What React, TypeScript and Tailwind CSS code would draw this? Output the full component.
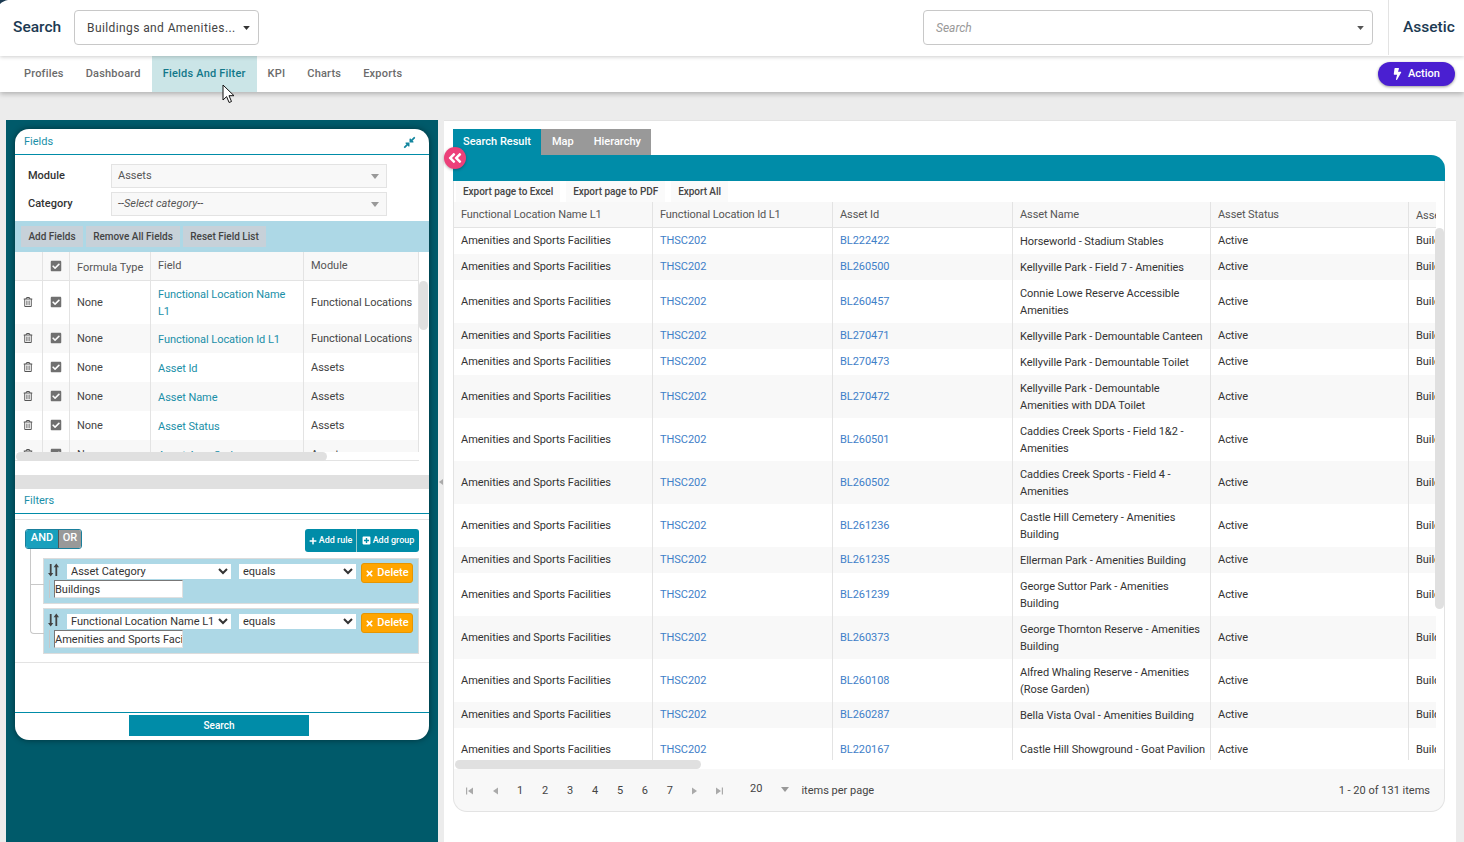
import { FaAngleDoubleLeft, FaBolt, FaCheckSquare, FaCompressAlt, FaPlus, FaPlusSquare, FaRegTrashAlt, FaTimes } from "react-icons/fa";

const navItems = ["Profiles", "Dashboard", "Fields And Filter", "KPI", "Charts", "Exports"];

const fieldRows = [
  { field: "Functional Location Name L1", module: "Functional Locations", tall: true },
  { field: "Functional Location Id L1", module: "Functional Locations", tall: false },
  { field: "Asset Id", module: "Assets", tall: false },
  { field: "Asset Name", module: "Assets", tall: false },
  { field: "Asset Status", module: "Assets", tall: false },
  { field: "Asset Area Code", module: "Assets", tall: false },
];

const results = [
  ["BL222422", "Horseworld - Stadium Stables"],
  ["BL260500", "Kellyville Park - Field 7 - Amenities"],
  ["BL260457", "Connie Lowe Reserve Accessible Amenities"],
  ["BL270471", "Kellyville Park - Demountable Canteen"],
  ["BL270473", "Kellyville Park - Demountable Toilet"],
  ["BL270472", "Kellyville Park - Demountable Amenities with DDA Toilet"],
  ["BL260501", "Caddies Creek Sports - Field 1&2 - Amenities"],
  ["BL260502", "Caddies Creek Sports - Field 4 - Amenities"],
  ["BL261236", "Castle Hill Cemetery - Amenities Building"],
  ["BL261235", "Ellerman Park - Amenities Building"],
  ["BL261239", "George Suttor Park - Amenities Building"],
  ["BL260373", "George Thornton Reserve - Amenities Building"],
  ["BL260108", "Alfred Whaling Reserve - Amenities (Rose Garden)"],
  ["BL260287", "Bella Vista Oval - Amenities Building"],
  ["BL220167", "Castle Hill Showground - Goat Pavilion"],
];

const Caret = ({ className }: { className: string }) => (
  <svg viewBox="0 0 10 6" className={className} fill="currentColor">
    <path d="M0 0h10L5 6z" />
  </svg>
);

const SortIcon = () => (
  <svg viewBox="0 0 11 14" className="h-[14px] w-[11px] text-[#444]" fill="currentColor">
    <path d="M1.8 1h1.8v9h1.7L2.7 13.5 0 10h1.8zM7.4 4.2H5.6L8.3.5 11 4.2H9.2V13H7.4z" />
  </svg>
);

const PagerIcon = ({ dir, edge }: { dir: "left" | "right"; edge?: boolean }) => (
  <svg viewBox="0 0 8 8" className="h-2 w-2 text-[#aaa]" fill="currentColor">
    {dir === "left" ? <path d="M7 .5v7L2 4z" /> : <path d="M1 .5v7L6 4z" />}
    {edge && (dir === "left" ? <path d="M0 .5h1.2v7H0z" /> : <path d="M6.8 .5H8v7H6.8z" />)}
  </svg>
);

const FormRow = ({ label, value, italic }: { label: string; value: string; italic?: boolean }) => (
  <div className="flex h-6 items-center">
    <div className="w-[96px] pl-[13px] text-[11px] font-medium text-[#333]">{label}</div>
    <div className={`flex h-6 w-[276px] items-center justify-between border border-[#e3e3e3] bg-[#f8f8f8] pl-[6px] pr-[7px] text-[11px] text-[#555] ${italic ? "italic" : ""}`}>
      {value}
      <Caret className="h-[5px] w-2 text-[#999]" />
    </div>
  </div>
);

const FilterRule = ({ field, value }: { field: string; value: string }) => (
  <div className="h-[46px] border border-[#dcdcdc] bg-[#add8e6] px-[4px] pt-[5px]">
    <div className="flex h-[16px] items-start">
      <span className="-mt-[1px] w-[19px]"><SortIcon /></span>
      <select defaultValue={field} className="h-[15px] w-[164px] bg-white text-[11px] text-[#333] outline-none">
        <option>{field}</option>
      </select>
      <select defaultValue="equals" className="ml-2 h-[15px] w-[117px] bg-white text-[11px] text-[#333] outline-none">
        <option>equals</option>
      </select>
      <button className="ml-[5px] -mt-[1px] flex h-[20px] w-[52px] shrink-0 items-center justify-center gap-[3px] rounded-[3px] border border-[#e69500] bg-[#ffa500] text-[11px] font-medium text-white">
        <FaTimes className="h-[9px] w-[9px]" />
        Delete
      </button>
    </div>
    <div className="flex h-[19px] items-start pl-[1px]">
      <div className="h-[18px] w-[1px] bg-[#c8c8c8]" />
      <input
        readOnly
        defaultValue={value}
        className="ml-[4px] h-[18px] w-[129px] border border-[#e0e0e0] border-l-[#777] border-t-[#777] bg-white text-[11px] text-[#333] outline-none"
      />
    </div>
  </div>
);

const App = () => {
  return (
    <div className="relative h-[842px] w-[1464px] overflow-hidden bg-[#ececec] font-['Roboto',sans-serif]">
      {/* Top header */}
      <header className="relative z-20 flex h-[56px] items-center bg-white pb-[1px] pl-[13px] shadow-[0_1px_4px_rgba(0,0,0,0.2)]">
        <div className="w-[61px] text-[15.5px] font-medium text-[#1c3a52]">Search</div>
        <div className="flex h-[35px] w-[185px] items-center justify-between rounded border border-[#c8c8c8] pl-3 pr-2 text-xs tracking-[0.4px] text-[#444]">
          Buildings and Amenities...
          <Caret className="h-[4px] w-[7px] text-[#333]" />
        </div>
        <div className="ml-[664px] flex h-[35px] w-[450px] items-center justify-between rounded border border-[#c8c8c8] pl-3 pr-2 text-xs italic text-[#999]">
          Search
          <Caret className="h-[4px] w-[7px] text-[#555]" />
        </div>
        <div className="ml-[15px] flex h-full items-center border-l border-[#e3e3e3] pl-[14px] text-[15.5px] font-medium text-[#1c3a52]">Assetic</div>
      </header>

      {/* Tabs */}
      <nav className="relative z-10 flex h-[36px] items-center justify-between bg-white pl-[13px] pr-[9px] shadow-[0_2px_5px_rgba(0,0,0,0.25)]">
        <div className="flex h-full">
          {navItems.map((item) => (
            <div
              key={item}
              className={
                item === "Fields And Filter"
                  ? "flex items-center bg-[#cbe5e7] px-[11px] text-[11px] font-medium tracking-[0.2px] text-[#12788a]"
                  : "flex items-center px-[11px] text-[11px] font-medium tracking-[0.2px] text-[#6b6b6b]"
              }
            >
              {item}
            </div>
          ))}
        </div>
        <button className="flex h-6 w-[77px] items-center justify-center gap-[6px] rounded-full bg-[#4a1fd1] text-[11px] font-medium text-white shadow-[0_1px_3px_rgba(0,0,0,0.4)]">
          <FaBolt className="h-3 w-[9px]" />
          Action
        </button>
      </nav>

      <main className="flex pl-[6px] pt-[28px]">
        {/* Left panel */}
        <aside className="h-[722px] w-[432px] bg-[#005a6a] p-[9px]">
          <div className="flex h-[611px] w-[414px] flex-col overflow-hidden rounded-[14px] bg-white shadow-[0_0_6px_rgba(0,0,0,0.45)]">
            <div className="flex h-[26px] shrink-0 items-center justify-between border-b border-[#008ca8] pl-[9px] pr-[13px] pt-[1px] text-[11px] text-[#1a8fa8]">
              Fields
              <FaCompressAlt className="h-[13px] w-[13px] text-[#12859e]" />
            </div>
            <div className="flex h-[66px] shrink-0 flex-col gap-1 pt-[9px]">
              <FormRow label="Module" value="Assets" />
              <FormRow label="Category" value="--Select category--" italic />
            </div>
            <div className="flex h-[31px] shrink-0 items-center gap-[3px] bg-[#add8e6] pl-[6px] text-[10px] font-medium text-[#444]">
              <div className="flex h-[21px] w-[62px] items-center justify-center bg-[#c7d1d9]">Add Fields</div>
              <div className="flex h-[21px] w-[94px] items-center justify-center bg-[#c7d1d9]">Remove All Fields</div>
              <div className="flex h-[21px] w-[83px] items-center justify-center bg-[#c7d1d9]">Reset Field List</div>
            </div>

            {/* Field list */}
            <div className="relative h-[209px] shrink-0 overflow-hidden">
              <div className="flex h-[29px] w-[404px] border-b border-[#e3e3e3] bg-[#f8f8f8] text-[11px] text-[#555]">
                <div className="w-[28px] border-r border-[#e3e3e3]" />
                <div className="flex w-[27px] items-center justify-center border-r border-[#e3e3e3]">
                  <FaCheckSquare className="h-3 w-3 text-[#707070]" />
                </div>
                <div className="flex w-[81px] items-center border-r border-[#e3e3e3] pl-[7px] pt-[4px]">Formula Type</div>
                <div className="flex w-[153px] items-center border-r border-[#e3e3e3] pl-[7px] pt-[1px]">Field</div>
                <div className="flex w-[115px] items-center border-r border-[#e3e3e3] pl-[7px] pt-[1px]">Module</div>
              </div>
              <div className="h-[171px] overflow-hidden">
                {fieldRows.map((row, i) => (
                  <div
                    key={row.field}
                    className={`flex w-[404px] text-[11px] tracking-[-0.05px] text-[#444] ${row.tall ? "h-[43px]" : "h-[29px]"} ${i % 2 ? "bg-[#f8f8f8]" : "bg-white"}`}
                  >
                    <div className="flex w-[28px] items-center justify-center border-r border-[#e3e3e3] pb-[1px] pr-[1px]">
                      <FaRegTrashAlt className="h-[10px] w-[10px] text-[#555]" />
                    </div>
                    <div className="flex w-[27px] items-center justify-center border-r border-[#e3e3e3] pb-[1px]">
                      <FaCheckSquare className="h-3 w-3 text-[#707070]" />
                    </div>
                    <div className="flex w-[81px] items-center border-r border-[#e3e3e3] pl-[7px] pt-[1px]">None</div>
                    <div className="flex w-[153px] items-center border-r border-[#e3e3e3] px-[7px] pt-[1px] leading-[17px] text-[#1a8fa8]">{row.field}</div>
                    <div className="flex w-[115px] items-center border-r border-[#e3e3e3] pl-[7px] pt-[1px] whitespace-nowrap">{row.module}</div>
                  </div>
                ))}
              </div>
              <div className="h-[9px] w-[404px] border-b border-[#e3e3e3]" />
              <div className="absolute left-[1px] top-[200px] h-[9px] w-[311px] rounded-full bg-[#e0e0e0]" />
              <div className="absolute right-[1px] top-[29px] h-[49px] w-[9px] rounded-full bg-[#e0e0e0]" />
            </div>

            <div className="h-[14px] shrink-0" />
            <div className="h-[14px] shrink-0 bg-[#e0e0e0]" />
            <div className="flex h-[25px] shrink-0 items-center border-b border-[#008ca8] pl-[9px] pt-[1px] text-[11px] text-[#1a8fa8]">Filters</div>

            {/* Query builder */}
            <div className="relative mt-[5px] h-[144px] shrink-0 border-y border-[#e3e3e3] pl-[28px] pr-[10px] pt-[9px]">
              <div className="absolute left-[15px] top-[29px] h-[85px] w-[14px] rounded-bl-sm border-b border-l border-[#c8c8c8]" />
              <div className="absolute left-[15px] top-[64px] h-[1px] w-[14px] bg-[#c8c8c8]" />
              <div className="flex h-[29px] items-start justify-between">
                <div className="-ml-[18px] flex h-5 w-[57px] overflow-hidden rounded-[3px] border border-[#1a7f9c] text-[11px] font-medium text-white">
                  <div className="flex w-[32px] items-center justify-center bg-[#18a0bd] pb-[2px]">AND</div>
                  <div className="flex flex-1 items-center justify-center border-l border-[#555] bg-[#999] pb-[2px]">OR</div>
                </div>
                <div className="flex h-[23px] w-[114px] overflow-hidden rounded-[3px] bg-[#008ca8] text-[9px] font-medium text-white">
                  <div className="flex w-[52px] items-center justify-center gap-[2px] border-r border-[#99cccc]">
                    <FaPlus className="h-2 w-2" />
                    Add rule
                  </div>
                  <div className="flex flex-1 items-center justify-center gap-[2px]">
                    <FaPlusSquare className="h-[9px] w-[9px]" />
                    Add group
                  </div>
                </div>
              </div>
              <div className="flex flex-col gap-1">
                <FilterRule field="Asset Category" value="Buildings" />
                <FilterRule field="Functional Location Name L1" value="Amenities and Sports Facilities" />
              </div>
            </div>

            <div className="h-[49px] shrink-0" />
            <div className="flex flex-1 justify-center border-t border-[#008ca8] pr-[6px] pt-[2px]">
              <button className="h-[21px] w-[180px] bg-[#008ca8] text-[10px] font-medium text-white">Search</button>
            </div>
          </div>
        </aside>

        {/* Right panel */}
        <section className="relative ml-[6px] h-[722px] w-[1012px] border-t border-[#e3e3e3] bg-white pl-[9px] pr-[11px] pt-[8px]">
          <div className="flex h-[26px] text-[11px] font-medium text-white">
            <div className="flex w-[88px] items-center justify-center bg-[#008ca8]">Search Result</div>
            <div className="flex w-[110px] items-center gap-[20px] bg-[#999] pl-[11px]">
              <span>Map</span>
              <span>Hierarchy</span>
            </div>
          </div>
          <div className="h-[26px] rounded-tr-[14px] bg-[#008ca8]" />

          <div className="border-x border-[#e3e3e3]">
            <div className="flex h-[21px] gap-[6px] pl-[2px]">
              {["Export page to Excel", "Export page to PDF", "Export All"].map((item) => (
                <div key={item} className="flex items-center bg-[#fafafa] px-[7px] text-[10px] font-medium tracking-[-0.05px] text-[#444]">{item}</div>
              ))}
            </div>

            {/* Results grid */}
            <div className="relative h-[567px] overflow-hidden">
              <div className="flex h-[26px] w-[982px] border-b border-[#e3e3e3] bg-[#f8f8f8] text-[11px] tracking-[-0.1px] text-[#555]">
                <div className="flex w-[199px] items-center border-r border-[#e3e3e3] pl-[7px] pt-[2px]">Functional Location Name L1</div>
                <div className="flex w-[180px] items-center border-r border-[#e3e3e3] pl-[7px] pt-[2px]">Functional Location Id L1</div>
                <div className="flex w-[180px] items-center border-r border-[#e3e3e3] pl-[7px] pt-[2px]">Asset Id</div>
                <div className="flex w-[198px] items-center border-r border-[#e3e3e3] pl-[7px] pt-[2px]">Asset Name</div>
                <div className="flex w-[198px] items-center border-r border-[#e3e3e3] pl-[7px] pt-[2px]">Asset Status</div>
                <div className="w-[27px] overflow-hidden whitespace-nowrap pl-[7px] pt-[6px]">Asset Type</div>
              </div>
              <div className="h-[532px] overflow-hidden">
                {results.map(([id, name], i) => (
                  <div key={id} className={`flex w-[982px] text-[11px] tracking-[-0.05px] text-[#333] ${name.length > 37 ? "h-[43px]" : "h-[26px]"} ${i % 2 ? "bg-[#f8f8f8]" : "bg-white"}`}>
                    <div className="flex w-[199px] items-center border-r border-[#e3e3e3] pl-[7px] pt-[1px]">Amenities and Sports Facilities</div>
                    <div className="flex w-[180px] items-center border-r border-[#e3e3e3] pl-[7px] pt-[1px] text-[#3f80c8]">THSC202</div>
                    <div className="flex w-[180px] items-center border-r border-[#e3e3e3] pl-[7px] pt-[1px] text-[#3f80c8]">{id}</div>
                    <div className="flex w-[198px] items-center border-r border-[#e3e3e3] pl-[7px] pr-[3px] pt-[1px] leading-[17.4px]">{name}</div>
                    <div className="flex w-[198px] items-center border-r border-[#e3e3e3] pl-[7px] pt-[1px]">Active</div>
                    <div className="flex w-[27px] items-center overflow-hidden whitespace-nowrap pl-[7px] pt-[1px]">Building</div>
                  </div>
                ))}
              </div>
              <div className="absolute left-[1px] top-[558px] h-[9px] w-[246px] rounded-full bg-[#e0e0e0]" />
              <div className="absolute right-0 top-[26px] h-[381px] w-[9px] rounded-full bg-[#e0e0e0]" />
            </div>
          </div>

          {/* Pager */}
          <div className="flex h-[43px] items-center justify-between rounded-b-[14px] border-x border-b border-[#e3e3e3] bg-[#f8f8f8] pl-[12px] pr-[14px] pt-[2px] text-[11px] text-[#444]">
            <div className="flex items-center">
              <div className="flex items-center gap-[17px]">
                <PagerIcon dir="left" edge />
                <PagerIcon dir="left" />
              </div>
              <div className="ml-[18px] flex w-[156px] justify-between">
                {[1, 2, 3, 4, 5, 6, 7].map((n) => (
                  <span key={n}>{n}</span>
                ))}
              </div>
              <div className="ml-[18px] flex items-center gap-[16px]">
                <PagerIcon dir="right" />
                <PagerIcon dir="right" edge />
              </div>
              <span className="ml-[27px] -mt-[3px]">20</span>
              <Caret className="ml-[19px] -mt-[3px] h-[5px] w-2 text-[#999]" />
              <span className="ml-[12px]">items per page</span>
            </div>
            <span>1 - 20 of 131 items</span>
          </div>

          <button className="absolute left-0 top-[26px] flex h-[22px] w-[22px] items-center justify-center rounded-full bg-[#ec407a] text-white shadow-[0_1px_3px_rgba(0,0,0,0.3)]">
            <FaAngleDoubleLeft className="h-4 w-4" />
          </button>
        </section>
      </main>

      {/* Corner mark, splitter arrow and mouse pointer from the capture */}
      <svg viewBox="0 0 8 4" className="absolute left-0 top-0 z-30 h-1 w-2 text-[#1c3a52]" fill="currentColor">
        <path d="M0 0h8C5 .5 2 2 0 4z" />
      </svg>
      <svg viewBox="0 0 4 6" className="absolute left-[439px] top-[479px] h-[6px] w-1 text-[#aaa]" fill="currentColor">
        <path d="M4 0v6L0 3z" />
      </svg>
      <svg viewBox="0 0 13 20" className="absolute left-[222px] top-[84px] z-30 h-5 w-[13px]">
        <path d="M1 1v15l3.6-3.4 2.5 5.9 2.4-1-2.5-5.8h5z" fill="#fff" stroke="#111" strokeWidth="1" />
      </svg>
    </div>
  );
};

export default App;
